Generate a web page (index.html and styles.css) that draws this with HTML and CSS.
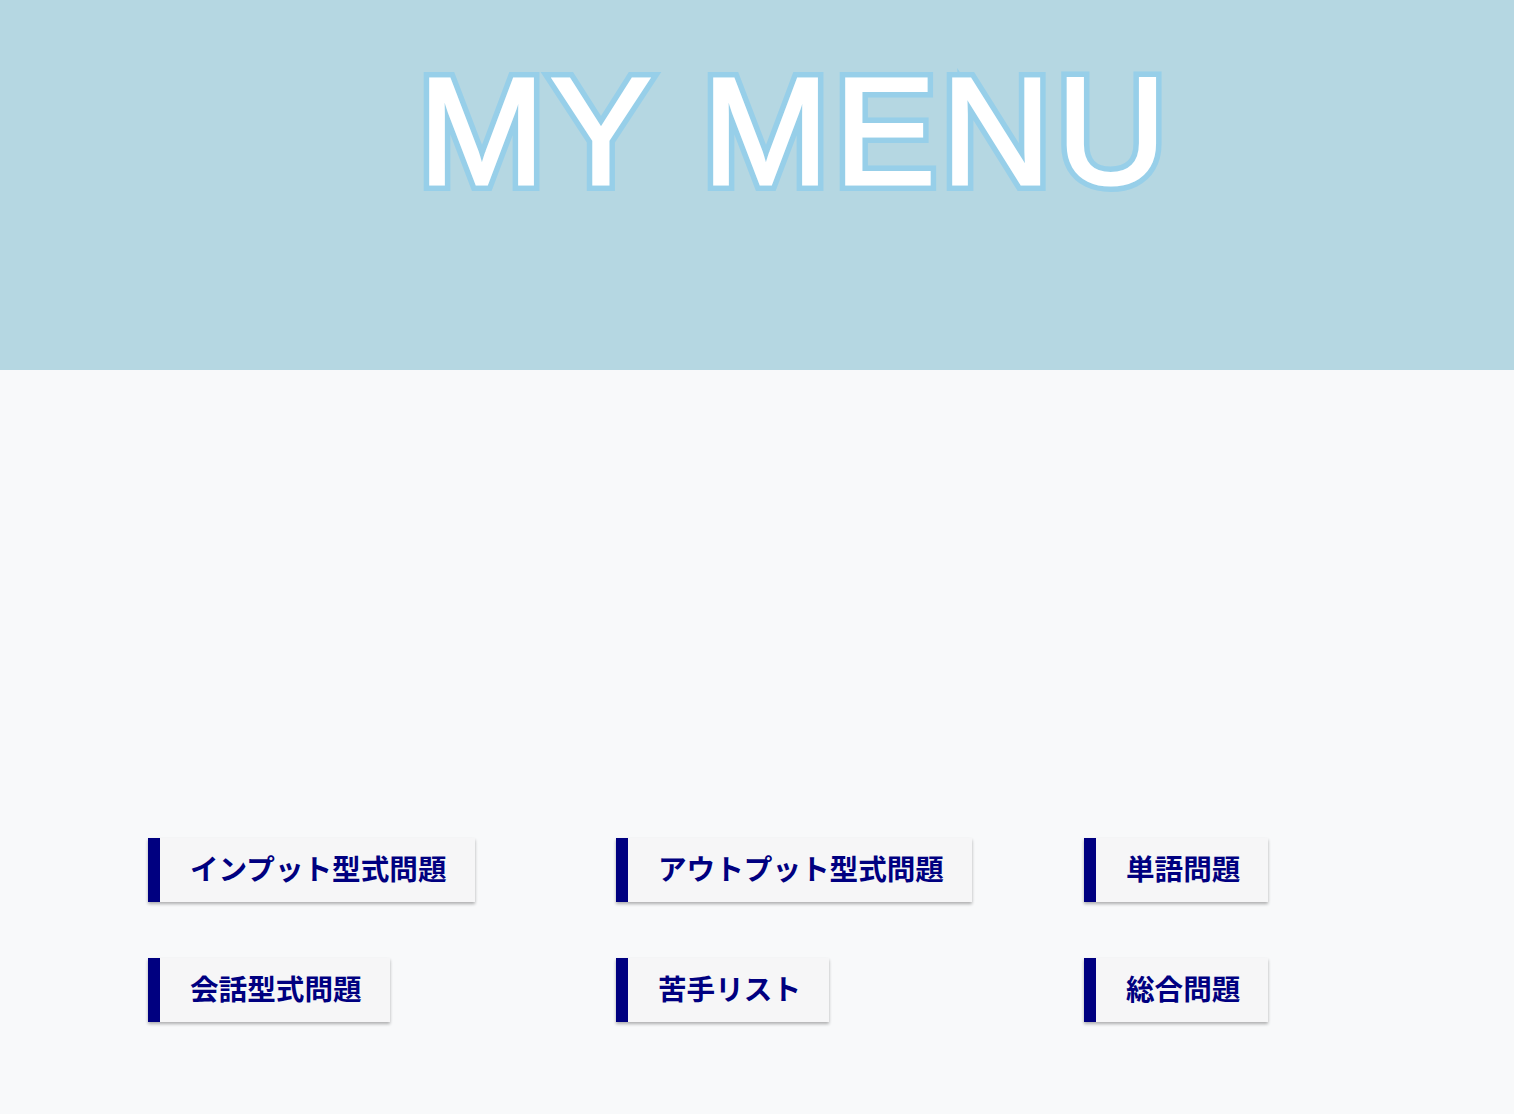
FILE: index.html
```html
<!DOCTYPE html>
<html lang="ja">
<head>
<meta charset="utf-8">
<title>MY MENU</title>
<link rel="stylesheet" href="styles.css">
</head>
<body>
<header class="hero">
  <h1 class="hero-title" data-text="MY MENU">MY MENU</h1>
</header>
<main class="menu">
  <div class="menu-grid">
    <div class="cell"><a class="menu-btn" href="#">インプット型式問題</a></div>
    <div class="cell"><a class="menu-btn" href="#">アウトプット型式問題</a></div>
    <div class="cell"><a class="menu-btn" href="#">単語問題</a></div>
    <div class="cell"><a class="menu-btn" href="#">会話型式問題</a></div>
    <div class="cell"><a class="menu-btn" href="#">苦手リスト</a></div>
    <div class="cell"><a class="menu-btn" href="#">総合問題</a></div>
  </div>
</main>
</body>
</html>
```
FILE: styles.css
```css
html, body {
  margin: 0;
  padding: 0;
}
body {
  background: #f8f9fa;
  font-family: "Noto Sans CJK JP", "Noto Sans", sans-serif;
  min-height: 1114px;
}
.hero {
  background: #b5d7e2;
  height: 370px;
  box-sizing: border-box;
  padding-top: 46px;
  padding-left: 76px;
  text-align: center;
}
.hero-title {
  position: relative;
  isolation: isolate;
  display: inline-block;
  margin: 0;
  font-family: "Liberation Sans", Arial, sans-serif;
  font-weight: 400;
  font-size: 152px;
  line-height: 170px;
  letter-spacing: 5.5px;
  color: #ffffff;
  -webkit-text-stroke: 3px #ffffff;
}
.hero-title::before {
  content: attr(data-text);
  position: absolute;
  left: 0;
  top: 0;
  z-index: -1;
  color: #97cfe9;
  -webkit-text-stroke: 14px #97cfe9;
}
.menu {
  padding: 468px 148px 0;
}
.menu-grid {
  display: grid;
  grid-template-columns: repeat(3, 282px);
  column-gap: 186px;
  row-gap: 56px;
}
.cell {
  display: flex;
}
.menu-btn {
  display: inline-block;
  background: #f6f6f7;
  border-left: 12px solid #000080;
  color: #000080;
  font-weight: 700;
  font-size: 28.6px;
  line-height: 32px;
  padding: 14px 28px 18px 30px;
  text-decoration: none;
  white-space: nowrap;
  box-shadow: 0 2px 3px rgba(0, 0, 0, 0.3);
}
```
